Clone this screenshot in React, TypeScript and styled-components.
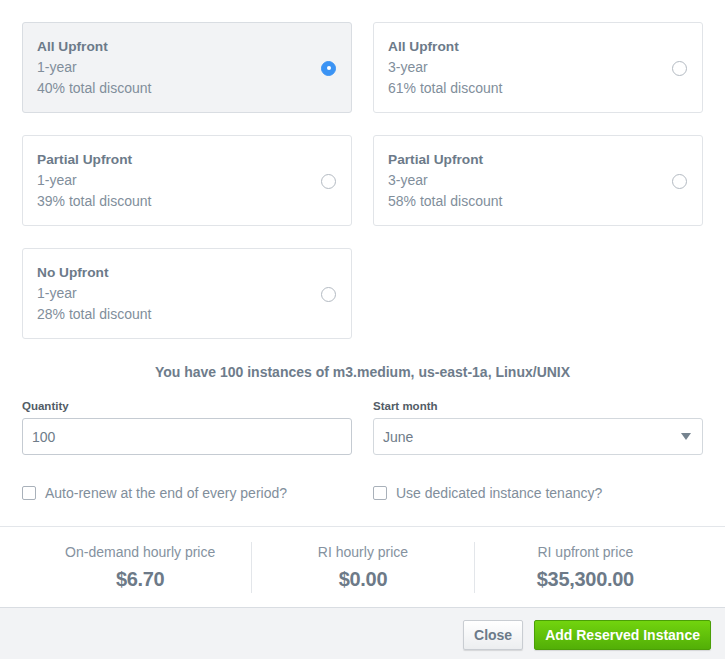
import React from 'react';
import styled, { createGlobalStyle } from 'styled-components';

interface PlanOption {
  id: string;
  title: string;
  term: string;
  discount: string;
}

interface PriceItem {
  label: string;
  value: string;
}

const plans: PlanOption[] = [
  { id: 'au1', title: 'All Upfront', term: '1-year', discount: '40% total discount' },
  { id: 'au3', title: 'All Upfront', term: '3-year', discount: '61% total discount' },
  { id: 'pu1', title: 'Partial Upfront', term: '1-year', discount: '39% total discount' },
  { id: 'pu3', title: 'Partial Upfront', term: '3-year', discount: '58% total discount' },
  { id: 'nu1', title: 'No Upfront', term: '1-year', discount: '28% total discount' },
];

const prices: PriceItem[] = [
  { label: 'On-demand hourly price', value: '$6.70' },
  { label: 'RI hourly price', value: '$0.00' },
  { label: 'RI upfront price', value: '$35,300.00' },
];

const GlobalStyle = createGlobalStyle`
  body {
    margin: 0;
    background: #ffffff;
    font-family: "Liberation Sans", Arial, sans-serif;
    -webkit-font-smoothing: antialiased;
  }
`;

const Page = styled.div`
  width: 725px;
  height: 659px;
  display: flex;
  flex-direction: column;
  background: #ffffff;
`;

const PlanGrid = styled.div`
  display: grid;
  grid-template-columns: 330px 330px;
  column-gap: 21px;
  row-gap: 22px;
  padding: 22px 22px 0 22px;
`;

const PlanCard = styled.label<{ $selected: boolean }>`
  display: flex;
  align-items: center;
  justify-content: space-between;
  height: 91px;
  box-sizing: border-box;
  padding: 0 15px 0 14px;
  border: 1px solid ${(p) => (p.$selected ? '#d9dde2' : '#e1e4e8')};
  border-radius: 3px;
  background: ${(p) => (p.$selected ? '#f2f3f5' : '#ffffff')};
  cursor: pointer;
`;

const PlanText = styled.div`
  display: flex;
  flex-direction: column;
  font-size: 14px;
  line-height: 21px;
  color: #818e9b;

  & > .plan-title {
    font-weight: bold;
    font-size: 13.7px;
    color: #6c7a89;
  }
`;

const Radio = styled.span<{ $checked: boolean }>`
  width: 15px;
  height: 15px;
  box-sizing: border-box;
  border-radius: 50%;
  display: flex;
  align-items: center;
  justify-content: center;
  margin-top: 1px;
  border: 1px solid ${(p) => (p.$checked ? '#3b93f4' : '#b3bac2')};
  background: ${(p) => (p.$checked ? '#3b93f4' : '#ffffff')};

  &::after {
    content: '';
    display: ${(p) => (p.$checked ? 'block' : 'none')};
    width: 4px;
    height: 4px;
    border-radius: 50%;
    background: #ffffff;
  }
`;

const InfoLine = styled.div`
  margin-top: 25px;
  text-align: center;
  font-size: 14px;
  line-height: 16px;
  font-weight: bold;
  color: #6e7c8b;
`;

const FormGrid = styled.div`
  display: grid;
  grid-template-columns: 330px 330px;
  column-gap: 21px;
  padding: 0 22px;
  margin-top: 19px;
`;

const Field = styled.div`
  display: flex;
  flex-direction: column;
  gap: 5px;
`;

const FieldLabel = styled.div`
  font-size: 11.5px;
  line-height: 14px;
  font-weight: bold;
  color: #525c66;
`;

const TextInput = styled.div`
  height: 37px;
  box-sizing: border-box;
  border: 1px solid #c5cbd2;
  border-radius: 3px;
  padding: 0 9px;
  display: flex;
  align-items: center;
  font-size: 14px;
  color: #6f7c89;
  background: #ffffff;
`;

const SelectBox = styled(TextInput)`
  justify-content: space-between;
  border-color: #d3d8dd;
  padding-right: 11px;
`;

const Caret = styled.span`
  width: 0;
  height: 0;
  border-left: 5.5px solid transparent;
  border-right: 5.5px solid transparent;
  border-top: 7px solid #75838f;
`;

const CheckRow = styled.div`
  display: grid;
  grid-template-columns: 330px 330px;
  column-gap: 21px;
  padding: 0 22px;
  margin-top: 28px;
`;

const CheckOption = styled.label`
  display: flex;
  align-items: center;
  gap: 9px;
  height: 20px;
  font-size: 14px;
  color: #818e9b;
`;

const CheckBox = styled.span`
  width: 14px;
  height: 14px;
  box-sizing: border-box;
  border: 1.5px solid #a9b1ba;
  border-radius: 2px;
  background: #ffffff;
`;

const PriceBar = styled.div`
  margin-top: 23px;
  border-top: 1px solid #e3e6ea;
  padding: 15px 29px 14px 29px;
  display: grid;
  grid-template-columns: repeat(3, 1fr);
`;

const PriceCell = styled.div<{ $first: boolean }>`
  display: flex;
  flex-direction: column;
  align-items: center;
  height: 51px;
  box-sizing: border-box;
  padding-top: 1px;
  border-left: ${(p) => (p.$first ? 'none' : '1px solid #e3e6ea')};

  & > .price-label {
    font-size: 14px;
    line-height: 18px;
    color: #8592a0;
  }
  & > .price-value {
    margin-top: 6px;
    font-size: 20px;
    line-height: 24px;
    font-weight: bold;
    color: #6d7a88;
    letter-spacing: -0.3px;
  }
`;

const Footer = styled.div`
  flex: 1;
  border-top: 1px solid #d9dde2;
  background: #f2f3f5;
  display: flex;
  justify-content: flex-end;
  align-items: flex-start;
  gap: 11px;
  padding: 12px 14px 0 0;
`;

const Button = styled.button<{ $primary?: boolean }>`
  height: 30px;
  box-sizing: border-box;
  padding: 0 10px;
  border-radius: 2px;
  font-family: "Liberation Sans", Arial, sans-serif;
  font-size: 14px;
  font-weight: bold;
  cursor: pointer;
  color: ${(p) => (p.$primary ? '#ffffff' : '#6c7a89')};
  border: 1px solid ${(p) => (p.$primary ? '#4b9f07' : '#c9cdd2')};
  background: ${(p) =>
    p.$primary
      ? 'linear-gradient(to bottom, #72d40e, #52af07)'
      : 'linear-gradient(to bottom, #ffffff, #eceef0)'};
  box-shadow: 0 1px 1px rgba(0, 0, 0, 0.12);
`;

export default function App() {
  return (
    <Page>
      <GlobalStyle />
      <PlanGrid>
        {plans.map((plan, i) => (
          <PlanCard key={plan.id} $selected={i === 0}>
            <PlanText>
              <span className="plan-title">{plan.title}</span>
              <span>{plan.term}</span>
              <span>{plan.discount}</span>
            </PlanText>
            <Radio $checked={i === 0} />
          </PlanCard>
        ))}
      </PlanGrid>

      <InfoLine>You have 100 instances of m3.medium, us-east-1a, Linux/UNIX</InfoLine>

      <FormGrid>
        <Field>
          <FieldLabel>Quantity</FieldLabel>
          <TextInput>100</TextInput>
        </Field>
        <Field>
          <FieldLabel>Start month</FieldLabel>
          <SelectBox>
            June
            <Caret />
          </SelectBox>
        </Field>
      </FormGrid>

      <CheckRow>
        <CheckOption>
          <CheckBox />
          Auto-renew at the end of every period?
        </CheckOption>
        <CheckOption>
          <CheckBox />
          Use dedicated instance tenancy?
        </CheckOption>
      </CheckRow>

      <PriceBar>
        {prices.map((p, i) => (
          <PriceCell key={p.label} $first={i === 0}>
            <span className="price-label">{p.label}</span>
            <span className="price-value">{p.value}</span>
          </PriceCell>
        ))}
      </PriceBar>

      <Footer>
        <Button>Close</Button>
        <Button $primary>Add Reserved Instance</Button>
      </Footer>
    </Page>
  );
}
